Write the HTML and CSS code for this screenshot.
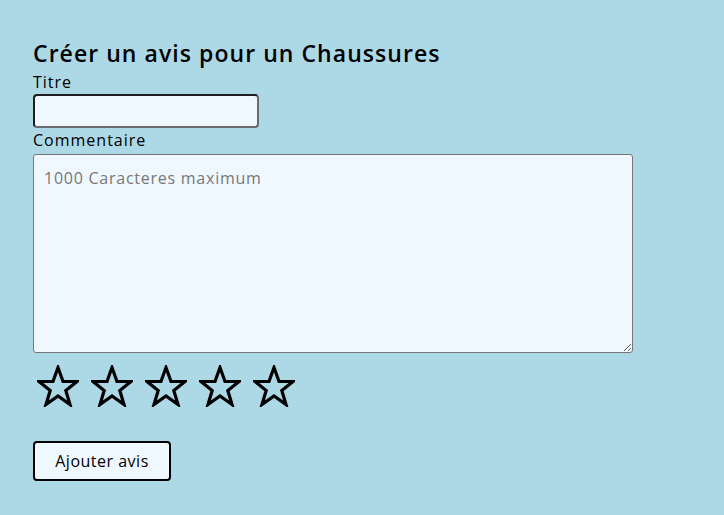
FILE: index.html
```html
<!DOCTYPE html>
<html lang="fr">
<head>
<meta charset="utf-8">
<link rel="stylesheet" href="styles.css">
</head>
<body>
<form class="review">
  <h2 class="review-title">Créer un avis pour un Chaussures</h2>
  <label class="field-label" for="titre">Titre</label>
  <input class="title-input" id="titre" type="text">
  <label class="field-label" for="comment">Commentaire</label>
  <textarea class="comment" id="comment" placeholder="1000 Caracteres maximum"></textarea>
  <div class="stars">
    <svg class="star" viewBox="0 0 42 42"><polygon points="21,2.5 26,16.5 40,16.5 28.8,25.5 33,39.5 21,31 9,39.5 13.2,25.5 2,16.5 16,16.5"/></svg>
    <svg class="star" viewBox="0 0 42 42"><polygon points="21,2.5 26,16.5 40,16.5 28.8,25.5 33,39.5 21,31 9,39.5 13.2,25.5 2,16.5 16,16.5"/></svg>
    <svg class="star" viewBox="0 0 42 42"><polygon points="21,2.5 26,16.5 40,16.5 28.8,25.5 33,39.5 21,31 9,39.5 13.2,25.5 2,16.5 16,16.5"/></svg>
    <svg class="star" viewBox="0 0 42 42"><polygon points="21,2.5 26,16.5 40,16.5 28.8,25.5 33,39.5 21,31 9,39.5 13.2,25.5 2,16.5 16,16.5"/></svg>
    <svg class="star" viewBox="0 0 42 42"><polygon points="21,2.5 26,16.5 40,16.5 28.8,25.5 33,39.5 21,31 9,39.5 13.2,25.5 2,16.5 16,16.5"/></svg>
  </div>
  <button class="submit" type="button">Ajouter avis</button>
</form>
</body>
</html>
```

FILE: styles.css
```css
html, body {
  margin: 0;
  padding: 0;
  background: #add8e6;
  height: 100%;
}
body {
  font-family: "Open Sans", "DejaVu Sans", sans-serif;
  color: #000;
}
.review {
  display: flex;
  flex-direction: column;
  align-items: flex-start;
  padding: 36px 33px;
}
.review-title {
  margin: 0;
  font-size: 23px;
  font-weight: 600;
  line-height: 34px;
  letter-spacing: 1.05px;
}
.field-label {
  font-size: 16px;
  line-height: 24px;
  letter-spacing: 1px;
}
.title-input {
  box-sizing: border-box;
  width: 226px;
  height: 34px;
  margin: 0;
  border: 2px solid;
  border-color: #1e1e1e #6a6a6a #6a6a6a #1e1e1e;
  border-radius: 4px;
  background: #f0f8ff;
}
.comment {
  box-sizing: border-box;
  width: 600px;
  height: 199px;
  margin: 2px 0 0;
  padding: 12px 10px;
  border: 1px solid #767676;
  border-radius: 3px;
  background: #f0f8ff;
  font-family: "Open Sans", "DejaVu Sans", sans-serif;
  font-size: 16px;
  letter-spacing: 0.75px;
}
.comment::placeholder {
  color: #777;
}
.stars {
  display: flex;
  gap: 12px;
  margin: 12px 0 0 4px;
}
.star {
  width: 42px;
  height: 42px;
  fill: none;
  stroke: #000;
  stroke-width: 3.2;
  stroke-linejoin: miter;
}
.submit {
  box-sizing: border-box;
  width: 138px;
  height: 40px;
  margin-top: 34px;
  border: 2px solid #000;
  border-radius: 4px;
  background: #f0f8ff;
  font-family: "Open Sans", "DejaVu Sans", sans-serif;
  font-size: 16px;
  color: #000;
  letter-spacing: 0.5px;
}
```
